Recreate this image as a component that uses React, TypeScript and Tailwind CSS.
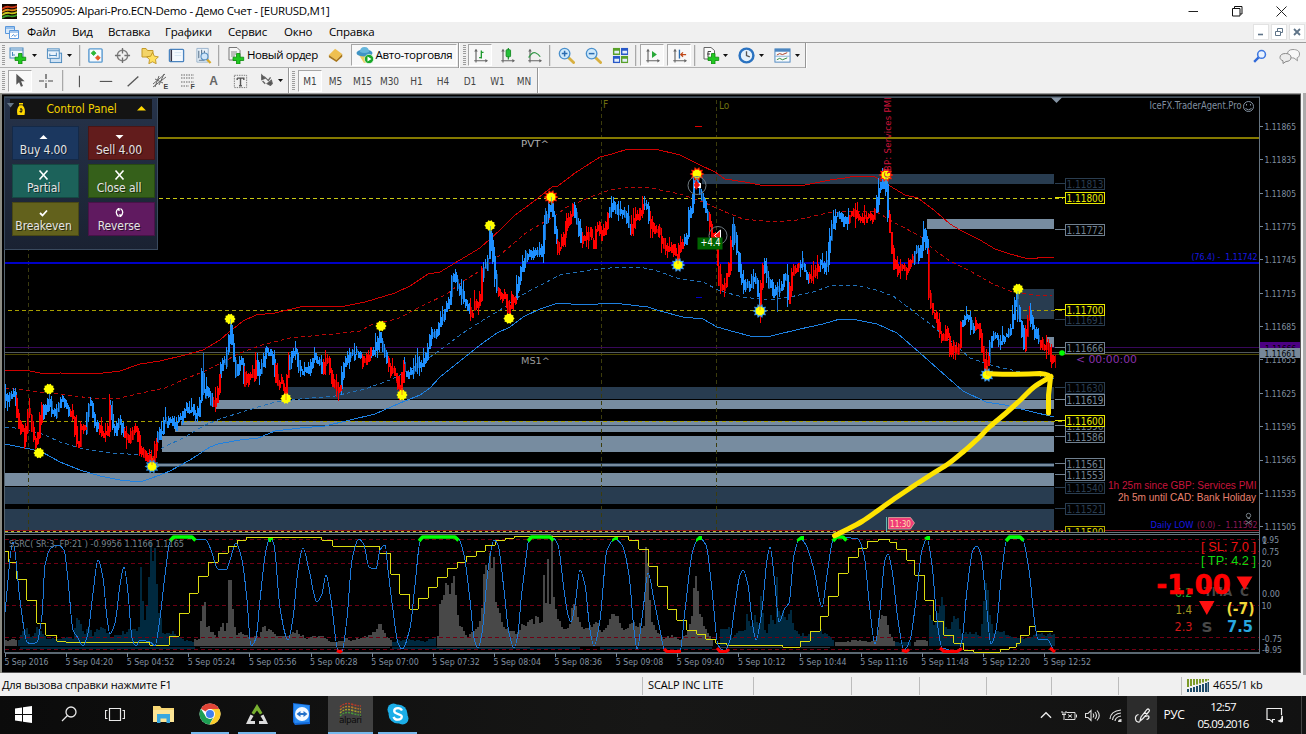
import React from "react";

const UI = "font-['Open_Sans','Noto_Sans',sans-serif]";
const TAHOMA = "'DejaVu Sans Condensed','DejaVu Sans',sans-serif";

type P = [number, number];
const pts = (a: number[]): string => {
  const out: string[] = [];
  for (let i = 0; i < a.length; i += 2) out.push(`${a[i]},${a[i + 1]}`);
  return out.join(" ");
};

/* ---------- market data ---------- */
const PRICE: [string, number[]][] = [
  ["b", [5, 400, 8, 396, 13, 392, 15, 395]],
  ["r", [16, 400, 18, 415, 21, 430, 24, 428, 26, 446, 29, 412, 31, 414, 34, 435, 38, 446, 40, 422]],
  ["b", [43, 404, 45, 415, 49, 400, 52, 410, 56, 412, 60, 405, 63, 399, 68, 408]],
  ["r", [70, 414, 74, 416, 77, 440, 79, 450, 81, 427, 84, 428]],
  ["b", [86, 430, 89, 405, 92, 404, 95, 420, 97, 428]],
  ["r", [99, 424, 104, 436, 106, 430, 108, 438]],
  ["b", [110, 408, 112, 418, 115, 432, 118, 424, 121, 422]],
  ["r", [124, 432, 130, 439, 134, 428, 138, 430, 141, 450, 145, 452, 149, 459, 152, 465, 155, 458]],
  ["b", [157, 442, 160, 430, 163, 430, 165, 418, 168, 425, 172, 421, 175, 426, 178, 420, 182, 420, 186, 408, 190, 410, 193, 408, 196, 416, 199, 410, 201, 398, 203, 370, 205, 398, 208, 388, 211, 394]],
  ["r", [213, 405, 216, 404, 218, 395]],
  ["b", [220, 376, 223, 362, 226, 360, 229, 340, 231, 325, 234, 350, 237, 372, 240, 362, 242, 358]],
  ["r", [244, 372, 246, 384, 249, 375, 252, 373, 255, 377]],
  ["b", [257, 362, 259, 373, 262, 365, 265, 355, 270, 351, 273, 357]],
  ["r", [275, 365, 278, 386, 281, 381, 285, 388, 287, 395]],
  ["b", [289, 365, 293, 351, 297, 352, 301, 370, 307, 370, 311, 368, 313, 355, 317, 360, 321, 360]],
  ["r", [323, 370, 326, 360, 329, 362, 332, 375, 338, 388]],
  ["b", [341, 385, 344, 365, 350, 354, 360, 353]],
  ["r", [362, 356, 365, 364, 368, 355]],
  ["b", [371, 351, 375, 351, 380, 332, 383, 345, 386, 353]],
  ["r", [388, 360, 392, 370, 396, 376, 400, 388, 402, 395]],
  ["b", [404, 366, 407, 375, 411, 369, 415, 371, 419, 362, 424, 364, 428, 354, 430, 338, 437, 334, 441, 320, 447, 306, 451, 300, 453, 280, 455, 275, 460, 290, 463, 295, 466, 305]],
  ["r", [470, 308, 473, 314, 477, 302, 481, 304]],
  ["b", [483, 272, 486, 265, 488, 268, 491, 230, 494, 255, 496, 273]],
  ["r", [498, 288, 502, 298, 505, 295, 507, 303, 510, 312, 513, 298]],
  ["b", [516, 298, 519, 281, 523, 266, 527, 257, 533, 252, 538, 253, 542, 256, 545, 222, 549, 212, 551, 201, 554, 214]],
  ["r", [557, 240, 560, 250, 564, 235, 568, 220, 571, 216]],
  ["b", [574, 207, 577, 220, 579, 226]],
  ["r", [582, 240, 588, 235, 592, 231, 595, 245, 598, 222, 603, 235, 606, 226]],
  ["b", [609, 212, 613, 202, 618, 211, 623, 209, 627, 214]],
  ["r", [631, 229, 635, 219, 641, 211]],
  ["b", [644, 205, 648, 206]],
  ["r", [650, 220, 655, 231, 660, 229, 665, 246, 670, 245, 674, 248, 678, 262, 680, 246]],
  ["b", [684, 241, 688, 235, 690, 212, 693, 205, 695, 180, 698, 178, 702, 193, 706, 205]],
  ["r", [709, 218, 713, 234, 717, 245, 719, 270, 722, 288, 726, 285, 730, 266]],
  ["b", [732, 238, 733, 225, 736, 240, 740, 270, 745, 284, 750, 288, 754, 276, 758, 288]],
  ["r", [760, 308, 762, 280]],
  ["b", [764, 264, 768, 279, 775, 292, 782, 289, 785, 276, 787, 277]],
  ["r", [789, 298, 793, 270, 797, 267]],
  ["b", [800, 262, 803, 263, 806, 274]],
  ["r", [809, 275, 814, 275, 817, 269]],
  ["b", [820, 266, 828, 264, 830, 246, 834, 222, 838, 216, 841, 216, 845, 222]],
  ["r", [849, 219, 852, 212, 858, 215, 865, 218, 873, 218]],
  ["b", [876, 210, 880, 186, 884, 177, 887, 180]],
  ["r", [889, 215, 892, 240, 894, 264, 898, 270, 904, 266, 908, 269, 912, 260]],
  ["b", [914, 257, 917, 245, 920, 257, 924, 236, 926, 226]],
  ["r", [928, 252, 930, 298, 933, 310, 937, 316, 941, 333, 945, 339, 948, 327, 951, 353, 955, 345, 960, 350]],
  ["b", [962, 322, 966, 318, 970, 318, 972, 325]],
  ["r", [975, 328, 979, 323, 982, 345, 985, 364, 987, 375]],
  ["b", [989, 360, 992, 336, 996, 338, 1002, 341, 1008, 335, 1013, 325, 1017, 292, 1020, 315, 1023, 329]],
  ["r", [1025, 348, 1028, 322]],
  ["b", [1030, 312, 1034, 328, 1037, 335]],
  ["r", [1040, 340, 1044, 347, 1048, 346, 1052, 357, 1055, 361]],
];

const RED_TOP = [5, 370, 30, 371, 45, 374, 60, 373, 95, 374, 120, 371, 140, 364, 160, 361, 185, 355, 203, 350, 220, 340, 228, 333, 243, 321, 256, 315, 275, 313, 300, 307, 317, 306, 345, 306, 365, 302, 395, 293, 410, 286, 428, 274, 440, 272, 455, 263, 480, 248, 500, 230, 515, 215, 533, 202, 552, 187, 558, 186, 575, 173, 600, 157, 612, 154, 628, 149, 655, 149, 680, 155, 700, 165, 715, 172, 725, 179, 745, 182, 760, 185, 805, 185, 830, 180, 845, 178, 855, 176, 875, 177, 890, 186, 905, 195, 918, 198, 935, 211, 950, 224, 960, 230, 980, 240, 995, 249, 1010, 254, 1025, 258, 1035, 259, 1040, 257, 1054, 257];
const RED_MID = [5, 388, 40, 392, 60, 394, 90, 398, 120, 398, 150, 391, 165, 388, 185, 379, 205, 371, 225, 361, 240, 353, 262, 345, 290, 338, 333, 334, 360, 331, 373, 324, 397, 319, 420, 307, 447, 294, 463, 281, 480, 271, 493, 261, 507, 249, 527, 232, 553, 217, 567, 207, 593, 196, 610, 190, 627, 187, 647, 187, 660, 190, 680, 194, 703, 202, 723, 211, 743, 219, 773, 222, 797, 220, 827, 213, 853, 211, 877, 212, 893, 222, 920, 236, 933, 249, 950, 261, 970, 271, 993, 284, 1010, 291, 1033, 295, 1052, 296];
const BLUE_MID = [5, 427, 25, 429, 45, 435, 60, 442, 80, 448, 110, 453, 145, 455, 160, 449, 185, 437, 205, 425, 220, 419, 245, 411, 275, 402, 300, 399, 335, 396, 365, 389, 390, 380, 410, 370, 430, 357, 440, 350, 463, 333, 480, 322, 500, 310, 520, 296, 535, 288, 560, 275, 590, 270, 620, 267, 640, 267, 657, 271, 680, 279, 703, 282, 720, 291, 743, 297, 767, 300, 790, 297, 813, 292, 830, 286, 853, 285, 873, 289, 893, 296, 913, 311, 930, 324, 953, 343, 970, 358, 994, 366, 1021, 372, 1054, 379];
const BLUE_LOW = [5, 444, 30, 449, 42, 452, 60, 462, 80, 470, 100, 476, 120, 480, 140, 482, 152, 478, 170, 471, 190, 460, 210, 447, 218, 444, 240, 440, 258, 438, 275, 431, 300, 428, 325, 426, 350, 420, 375, 414, 400, 403, 420, 395, 430, 388, 440, 377, 460, 361, 480, 345, 497, 333, 510, 327, 523, 317, 540, 309, 558, 303, 583, 305, 613, 303, 648, 307, 660, 311, 683, 317, 703, 319, 717, 327, 735, 332, 750, 336, 771, 336, 800, 329, 823, 324, 840, 319, 857, 320, 877, 324, 897, 333, 920, 353, 947, 377, 963, 391, 986, 402, 1005, 405, 1029, 411, 1054, 417];

const OSC = [5, 612, 13, 542, 20, 600, 27, 642, 31, 644, 37, 642, 42, 615, 45, 565, 51, 548, 58, 545, 64, 550, 68, 580, 73, 630, 78, 638, 83, 646, 88, 633, 93, 593, 98, 560, 103, 578, 107, 618, 110, 634, 115, 623, 120, 585, 124, 567, 128, 593, 132, 638, 136, 646, 140, 640, 150, 642, 155, 646, 160, 618, 165, 575, 170, 542, 178, 537, 195, 539, 206, 540, 211, 550, 218, 569, 226, 570, 230, 560, 236, 543, 242, 560, 247, 600, 251, 646, 256, 638, 260, 600, 266, 550, 270, 538, 274, 545, 280, 608, 288, 640, 293, 618, 298, 570, 303, 548, 309, 570, 317, 602, 322, 594, 326, 575, 331, 600, 338, 650, 342, 651, 347, 618, 352, 560, 359, 539, 364, 545, 369, 567, 376, 569, 380, 550, 385, 545, 388, 570, 393, 610, 398, 643, 402, 649, 410, 628, 415, 585, 420, 542, 426, 536, 458, 538, 464, 555, 470, 600, 474, 638, 478, 648, 482, 633, 488, 570, 494, 540, 498, 545, 504, 590, 509, 633, 514, 648, 518, 634, 521, 600, 524, 575, 529, 540, 535, 537, 553, 538, 558, 545, 564, 590, 568, 615, 571, 622, 575, 605, 580, 570, 585, 585, 590, 630, 594, 646, 600, 620, 607, 550, 615, 539, 622, 545, 629, 575, 634, 630, 637, 649, 643, 610, 648, 573, 654, 600, 660, 630, 665, 651, 680, 651, 685, 610, 693, 550, 699, 538, 706, 545, 712, 590, 718, 645, 725, 651, 730, 640, 735, 605, 740, 575, 743, 570, 748, 585, 752, 620, 756, 640, 762, 610, 767, 560, 770, 547, 775, 585, 779, 622, 785, 608, 789, 603, 794, 555, 800, 538, 806, 545, 814, 570, 822, 607, 827, 575, 833, 540, 838, 537, 858, 539, 864, 555, 870, 610, 875, 644, 880, 610, 885, 560, 888, 554, 892, 570, 898, 620, 904, 650, 910, 640, 916, 600, 922, 550, 927, 539, 932, 565, 937, 620, 942, 648, 958, 651, 962, 640, 967, 590, 973, 550, 977, 546, 981, 555, 986, 600, 991, 644, 996, 630, 1002, 570, 1007, 539, 1022, 538, 1029, 570, 1035, 625, 1038, 639, 1047, 639, 1054, 651];

/* stepped line: start x, level */
const STEPS = [5, 551, 9, 562, 17, 579, 27, 600, 37, 623, 46, 635, 57, 641, 66, 642, 150, 645, 170, 636, 180, 613, 190, 593, 199, 576, 209, 562, 219, 553, 229, 546, 238, 540, 247, 537, 322, 540, 333, 546, 380, 553, 391, 574, 400, 594, 410, 609, 419, 598, 429, 587, 438, 577, 448, 568, 458, 562, 467, 556, 477, 551, 486, 545, 496, 540, 506, 538, 515, 536, 629, 540, 639, 549, 649, 566, 658, 586, 668, 609, 677, 620, 687, 630, 697, 634, 706, 639, 716, 643, 727, 645, 783, 647, 801, 641, 811, 631, 821, 616, 829, 596, 839, 573, 849, 557, 859, 548, 868, 541, 879, 539, 890, 542, 897, 549, 907, 560, 915, 575, 925, 600, 934, 621, 944, 635, 954, 643, 964, 650, 974, 652, 1001, 649, 1010, 647, 1017, 643, 1021, 635, 1030, 626, 1036, 631, 1053, 631];

const HIST: [string, number[]][] = [
  ["g", [5, 6, 16, 6]],
  ["b", [18, 6, 25, 20, 30, 8, 37, 18, 45, 8, 55, 7, 66, 9, 72, 8, 74, 20, 77, 36, 79, 22, 84, 14, 88, 20, 92, 10, 101, 22, 105, 15, 110, 10, 120, 12, 125, 15, 137, 17, 139, 18, 140, 80, 142, 42, 144, 30, 147, 40, 149, 94, 154, 97, 156, 55, 158, 35, 162, 15, 166, 12, 172, 14, 178, 8, 185, 6, 192, 4]],
  ["g", [194, 6, 199, 8, 201, 40, 204, 40, 206, 20, 210, 15, 216, 8, 222, 24, 225, 10, 228, 60, 230, 60, 232, 35, 235, 12, 240, 13, 250, 8, 258, 10, 262, 18, 270, 16, 276, 10, 285, 10, 297, 14, 305, 7, 312, 10, 322, 9, 330, 4, 342, 5, 345, 9, 350, 5, 360, 8, 370, 10, 378, 20, 381, 20, 386, 10, 390, 6]],
  ["b", [392, 4, 400, 6, 410, 6, 425, 5, 434, 8]],
  ["g", [437, 10, 439, 40, 442, 42, 445, 55, 450, 60, 454, 68, 456, 35, 460, 18, 466, 10, 474, 14, 478, 20, 481, 35, 482, 70, 486, 78, 490, 85, 494, 86, 495, 45, 500, 25, 505, 18, 510, 15, 515, 12, 520, 20, 526, 22, 532, 25, 537, 28, 541, 25, 543, 82, 545, 40, 547, 90, 549, 45, 551, 98, 553, 48, 556, 30, 560, 20, 568, 18, 574, 50, 576, 30, 580, 20, 590, 18, 596, 22, 602, 12, 608, 25, 612, 30, 618, 30, 622, 18, 628, 20, 636, 22, 643, 20, 644, 95, 646, 95, 648, 60, 650, 30, 655, 15, 662, 8, 672, 10, 680, 6, 686, 12, 691, 30, 693, 60, 696, 68, 698, 40, 700, 30, 705, 15, 712, 6]],
  ["b", [720, 16, 727, 20, 732, 8, 738, 14, 744, 15, 746, 32, 750, 20, 755, 30, 758, 20, 759, 75, 761, 35, 765, 12, 770, 28, 775, 25, 776, 75, 778, 35, 783, 35, 785, 25, 787, 35, 790, 40, 793, 15, 800, 12, 806, 10, 812, 16, 820, 15, 828, 10, 833, 5]],
  ["g", [835, 4, 845, 4, 855, 6, 870, 4, 876, 8, 879, 30, 886, 32, 888, 15, 893, 5]],
  ["b", [895, 4, 910, 4]],
  ["g", [914, 5, 926, 6]],
  ["b", [929, 28, 933, 20, 937, 30, 940, 44, 943, 40, 945, 20, 948, 15, 953, 28, 957, 30, 960, 12, 965, 14, 980, 12, 984, 50, 986, 78, 989, 30, 993, 15, 1000, 16, 1005, 12, 1012, 8, 1020, 8, 1030, 9, 1035, 12, 1045, 12, 1054, 12]],
];

const rnd = (n: number) => {
  const v = Math.sin(n * 12.9898) * 43758.5453;
  return v - Math.floor(v);
};
const lerp = (a: number[], x: number) => {
  for (let i = 0; i < a.length - 2; i += 2)
    if (x <= a[i + 2]) return a[i + 1] + ((a[i + 3] - a[i + 1]) * (x - a[i])) / (a[i + 2] - a[i] || 1);
  return a[a.length - 1];
};

const candlePaths = () => {
  const d: Record<string, string> = { b: "", r: "", bd: "", rd: "" };
  PRICE.forEach(([c, own], n) => {
    const next = PRICE[n + 1];
    const a = next ? [...own, next[1][0], next[1][1]] : own;
    const end = a[a.length - 2];
    for (let x = a[0]; x < end - 0.5; x += 1.9) {
      const y1 = lerp(a, x);
      const y2 = lerp(a, Math.min(end, x + 1.9));
      const swing = (rnd(x + 2) - 0.5) * 5;
      const lo = Math.min(y1, y2) + swing - rnd(x) * 3.5;
      const hi = Math.max(y1, y2) + swing + rnd(x + 7) * 3.5;
      const xi = Math.round(x);
      const k = rnd(x + 3) > 0.74 ? c + "d" : c;
      d[k] += `M${xi} ${lo.toFixed(1)}h2V${(hi + 1.5).toFixed(1)}h-2z`;
      const w = rnd(x + 11) > 0.6 ? 11 : 4;
      d[c] += `M${xi} ${(lo - rnd(x + 5) * w).toFixed(1)}h1V${(hi + rnd(x + 9) * w).toFixed(1)}h-1z`;
    }
  });
  return d;
};
const histPaths = () => {
  const d: Record<string, string> = { b: "", g: "" };
  HIST.forEach(([c, a]) => {
    const end = a[a.length - 2];
    for (let x = a[0]; x <= end; x += 2) {
      const h = lerp(a, x) * (0.86 + rnd(x) * 0.28);
      d[c] += `M${Math.round(x)} 646V${Math.round(646 - h)}h2V646z`;
    }
  });
  return d;
};
const CANDLES = candlePaths();
const BARS = histPaths();
const stepPath = () => {
  let s = `M${STEPS[0]} ${STEPS[1]}`;
  for (let i = 2; i < STEPS.length; i += 2) s += `H${STEPS[i] - 1}L${STEPS[i]} ${STEPS[i + 1]}`;
  return s;
};
/* monotone cubic: passes through every point and is flat at the extremes */
const curve = (a: number[]) => {
  const n = a.length / 2;
  const X = (i: number) => a[2 * i];
  const Y = (i: number) => a[2 * i + 1];
  const slope = (i: number) => (Y(i + 1) - Y(i)) / (X(i + 1) - X(i));
  const m = (i: number) => {
    if (i === 0) return slope(0);
    if (i === n - 1) return slope(n - 2);
    const p = slope(i - 1);
    const q = slope(i);
    return p * q <= 0 ? 0 : (2 * p * q) / (p + q);
  };
  let s = `M${X(0)} ${Y(0)}`;
  for (let i = 0; i < n - 1; i++) {
    const h = (X(i + 1) - X(i)) / 3;
    s += `C${(X(i) + h).toFixed(1)} ${(Y(i) + m(i) * h).toFixed(1)} ${(X(i + 1) - h).toFixed(1)} ${(Y(i + 1) - m(i + 1) * h).toFixed(1)} ${X(i + 1)} ${Y(i + 1)}`;
  }
  return s;
};

const Txt = ({ x, y, w, s = 9, c = "#8090a0", b, f = TAHOMA, t }: { x: number; y: number; w?: number; s?: number; c?: string; b?: boolean; f?: string; t: string }) => (
  <text x={x} y={y} textLength={w} lengthAdjust="spacingAndGlyphs" fontSize={s} fill={c} fontWeight={b ? 700 : 400} fontFamily={f} xmlSpace="preserve">
    {t}
  </text>
);

const Sun = ({ x, y, ring }: { x: number; y: number; ring?: string }) => {
  const star = (r1: number, r2: number) => {
    let s = "";
    for (let i = 0; i < 20; i++) {
      const r = i % 2 ? r2 : r1;
      const t = (i * Math.PI) / 10;
      s += `${(x + r * Math.cos(t)).toFixed(1)},${(y + r * Math.sin(t)).toFixed(1)} `;
    }
    return s;
  };
  return (
    <g>
      {ring && <polygon points={star(7.4, 5)} fill={ring} />}
      <polygon points={star(ring ? 4.8 : 5.6, ring ? 4.1 : 4.4)} fill="#ffff00" />
    </g>
  );
};

const ZONES: [number, number, number, string][] = [
  [702, 174, 9.5, "d"], [927, 219, 10, "l"], [1018, 289, 30, "d"], [1047, 337, 10, "l"],
  [288, 387, 12, "d"], [215, 400, 9, "l"], [181, 421, 4, "l"], [175, 425.5, 6.5, "l"],
  [162, 436, 16, "l"], [157, 464, 2, "l"], [5, 473, 13, "l"], [5, 487, 16.5, "d"], [5, 509, 20.5, "d"],
];
const TAGS: [string, number, string][] = [
  ["1.11813", 184, "#2a3d50"], ["1.11772", 230, "#708090"], ["1.11691", 320, "#2a3d50"],
  ["1.11666", 348, "#708090"], ["1.11630", 388, "#2a3d50"], ["1.11619", 400, "#778899"], ["1.11596", 426, "#708090"],
  ["1.11586", 437, "#708090"], ["1.11553", 474.5, "#708090"], ["1.11561", 464, "#708090"], ["1.11540", 488, "#2a3d50"], ["1.11521", 509, "#2a3d50"],
  ["1.11800", 198, "#e8e800"], ["1.11700", 310, "#e8e800"], ["1.11600", 421, "#e8e800"],
];
const AXIS = ["1.11865", "1.11835", "1.11805", "1.11775", "1.11745", "1.11715", "1.11685", "1.11655", "1.11625", "1.11595", "1.11565", "1.11535", "1.11505"];
const TIMES = ["5 Sep 2016", "5 Sep 04:20", "5 Sep 04:52", "5 Sep 05:24", "5 Sep 05:56", "5 Sep 06:28", "5 Sep 07:00", "5 Sep 07:32", "5 Sep 08:04", "5 Sep 08:36", "5 Sep 09:08", "5 Sep 09:40", "5 Sep 10:12", "5 Sep 10:44", "5 Sep 11:16", "5 Sep 11:48", "5 Sep 12:20", "5 Sep 12:52"];
const SUNS: [number, number, string?][] = [
  [49, 389], [39, 453], [152, 466.5, "#2f8fe0"], [230, 319], [286, 398.5], [381, 326], [402, 395], [490, 225.5], [509, 318.5],
  [551, 197, "#ff2000"], [678, 265, "#3a9af0"], [697, 174, "#ff2000"], [760, 311, "#3a9af0"], [886, 175, "#ff2000"], [987, 375, "#3a9af0"], [1018, 289],
];
const LIM: P[] = [[170, 195], [419, 458], [528, 553], [833, 846], [1006, 1023]];

const Chart = () => (
  <svg className="block" width="1306" height="582" viewBox="0 93 1306 582">
    <rect x="0" y="93" width="1306" height="582" fill="#f0f0f0" />
    <rect x="0" y="93" width="1303" height="1" fill="#9a9a9a" />
    <rect x="1" y="94" width="1301" height="579" fill="#000" />
    <g shapeRendering="crispEdges">
      <rect x="0" y="93" width="2" height="580" fill="#8c8c84" />
      <rect x="2" y="94" width="1299" height="1" fill="#3c3c3c" />
      <rect x="1300" y="94" width="1" height="579" fill="#555" />
      <rect x="1301" y="93" width="2" height="582" fill="#f4f4f4" />
      <rect x="1303" y="93" width="3" height="582" fill="#ababab" />
      <rect x="2" y="672" width="1299" height="1" fill="#555" />
      <rect x="4" y="97" width="1256" height="1" fill="#4a5560" />
      <rect x="4" y="96" width="1256" height="1" fill="#2e3a44" />
      <rect x="4" y="97" width="1" height="556" fill="#56646f" />
      <rect x="1259" y="97" width="1" height="556" fill="#667480" />
      {ZONES.map(([x, y, h, c], i) => (
        <rect key={i} x={x} y={y} width={1054 - x} height={h} fill={c === "d" ? "#283c50" : "#778ca0"} />
      ))}
      <path d="M28.5 100V531" stroke="#3a3a10" strokeDasharray="4 3" />
      <path d="M716.5 100V531M601.5 100V531" stroke="#3c3c0c" strokeDasharray="4 3" />
      <path d="M157 463.5H1054M157 466.5H1054M5 487.5H1054M181 425.5H1054" stroke="#2a3d50" />
      <rect x="158" y="137" width="1101" height="2" fill="#857a00" />
      <path d="M5 198.5H1063" stroke="#c8c814" strokeDasharray="4 3" />
      <rect x="5" y="262" width="1254" height="2" fill="#0000c8" />
      <path d="M8 310.5H1063M8 421.5H1063" stroke="#a8a000" strokeWidth="1" strokeDasharray="4 3" />
      <path d="M5 347.5H1259" stroke="#38085a" />
      <rect x="5" y="352" width="1254" height="1" fill="#52585c" />
      <rect x="5" y="354" width="1254" height="1" fill="#4a4600" />
      <rect x="5" y="530" width="1254" height="1" fill="#8a1420" />
      <rect x="5" y="532" width="1254" height="1" fill="#69757e" />
      <path d="M5 531.5H1063" stroke="#c0b820" strokeDasharray="3 3" />
      <rect x="5" y="534" width="1254" height="1" fill="#69757e" />
      <rect x="5" y="652" width="1255" height="2" fill="#5b6872" />

      <polyline points={pts(RED_TOP)} fill="none" stroke="#d00000" />
      <polyline points={pts(RED_MID)} fill="none" stroke="#b80808" strokeDasharray="4 3" />
      <polyline points={pts(BLUE_MID)} fill="none" stroke="#2070b8" strokeDasharray="4 3" />
      <polyline points={pts(BLUE_LOW)} fill="none" stroke="#1e80e0" />
      <path d={CANDLES.bd} fill="#10508c" />
      <path d={CANDLES.rd} fill="#b00000" />
      <path d={CANDLES.b} fill="#1e90ff" />
      <path d={CANDLES.r} fill="#ff0000" />
      <path d="M203.5 353V395M733.5 217V250M777.5 290V312M112.5 401V420M49.5 392V405M545.5 208V240M1017.5 295V310" stroke="#1c70c8" />
      <path d="M1055.500 355V368" stroke="#c00000" />
      <path d="M695 126.500H702" stroke="#e00000" />
      <path d="M696 297.500H702" stroke="#0000c8" />
    </g>

    {SUNS.map(([x, y, r], i) => <Sun key={i} x={x} y={y} ring={r} />)}
    <path d="M152 456v9M286 392v8M402 388v7M678 258v6M760 303v7M987 366v9" stroke="#e87818" strokeWidth="1" opacity=".8" />
    <path d="M230.500 319v8M490.500 226v8M551.500 197v8M697 176v8M886 176v8M1018 291v8" stroke="#6aa890" strokeWidth="1" opacity=".8" />
    <circle cx="697" cy="185.500" r="9" fill="none" stroke="#6f7a80" />
    <circle cx="718" cy="235.500" r="9" fill="none" stroke="#6f7a80" />
    <path d="M694 183h7v5h-7z" fill="#fff" />
    <path d="M696 180l4 5-4 5-2-5z" fill="#e81010" />
    <path d="M720.500 230v11l-6-5.500z" fill="#ff1010" stroke="#fff" strokeWidth="1" />
    <rect x="697.500" y="237.500" width="25" height="12" fill="#006400" />
    <Txt x={700.500} y={246} w={20} s={10} c="#fff" t="+4.4" f="'DejaVu Sans'" />

    <Txt x={603} y={108} s={10} c="#70700f" t="F" />
    <Txt x={719} y={108.500} s={10} c="#70700f" t="Lo" />
    <Txt x={521} y={147} w={28} s={9.500} c="#b0b0b0" t="PVT^" f="'DejaVu Sans'" />
    <Txt x={521} y={364} w={29} s={9.500} c="#9a9a9a" t="MS1^" f="'DejaVu Sans'" />
    <clipPath id="top"><rect x="870" y="98" width="30" height="80" /></clipPath>
    <g clipPath="url(#top)">
      <text transform="translate(890.500 178) rotate(-90)" fontSize="9.500" fill="#d0143c" textLength="81" fontFamily={TAHOMA}>GBP: Services PMI</text>
    </g>
    <path d="M1051 97.500h11l-5.500 5.500z" fill="#8594a4" />
    <Txt x={1149.500} y={109} w={92} s={10.500} t="IceFX.TraderAgent.Pro" />
    <g fill="none" stroke="#8594a4" strokeWidth="1">
      <circle cx="1248.500" cy="106.500" r="5" />
      <path d="M1245.500 108.500q3 2.800 6 0" />
      <path d="M1246.500 104v1.500M1250.500 104v1.500" />
    </g>
    <Txt x={1191.500} y={260} w={66} s={9.500} c="#1818e0" t="(76.4) -  1.11742" />

    {TAGS.map(([t, y, c]) => (
      <g key={t}>
        <path d={`M1055 ${Math.round(y - 1) + 0.5}H1065`} stroke={c} />
        <rect x="1065.500" y={Math.round(y - 6) + 0.5} width="39" height="11" fill="#000" stroke={c} />
        <Txt x={1066.500} y={Math.round(y - 6) + 10} w={37} s={11} c={c} t={t} />
      </g>
    ))}
    <clipPath id="cut"><rect x="1050" y="520" width="60" height="12" /></clipPath>
    <g clipPath="url(#cut)">
      <rect x="1065.500" y="526.500" width="39" height="11" fill="#000" stroke="#b8b000" />
      <Txt x={1066.500} y={536} w={37} s={11} c="#d8d000" t="1.11500" />
    </g>
    <circle cx="1062" cy="353" r="2.800" fill="#00ff00" />
    <Txt x={1076} y={363} w={61} s={11} c="#8a32ac" t="< 00:00:00" f="'DejaVu Sans'" />

    {AXIS.map((t, i) => (
      <g key={t}>
        <path d={`M1260 ${Math.round(126 + i * 33.35) + 0.5}h3`} stroke="#778899" />
        <Txt x={1264.500} y={129.800 + i * 33.350} w={31.500} s={9} t={t} />
      </g>
    ))}
    <rect x="1260" y="342" width="40" height="6" fill="#4b0082" />
    <clipPath id="pt"><rect x="1260" y="342" width="40" height="6" /></clipPath>
    <g clipPath="url(#pt)"><Txt x={1265} y={351.500} w={31} s={9} c="#000" t="1.11666" /></g>
    <rect x="1260" y="348" width="40" height="10" fill="#778899" />
    <Txt x={1264.500} y={356.500} w={31.500} s={9} c="#000" t="1.11661" />

    <Txt x={1108} y={489} w={148.500} s={11} c="#c8143c" f="'Liberation Sans'" t="1h 25m since GBP: Services PMI" />
    <Txt x={1118} y={501} w={138} s={11} c="#e9806e" f="'Liberation Sans'" t="2h 5m until CAD: Bank Holiday" />
    <Txt x={1150.500} y={527.500} w={43} s={9.500} c="#1818e0" t="Daily LOW" />
    <Txt x={1197} y={527.500} w={60.500} s={9.500} c="#8c1858" t="(0.0) -  1.11502" />
    <g stroke="#778088" fill="none">
      <circle cx="1248.500" cy="515.500" r="2.200" />
      <path d="M1247.500 518.500h2.500M1245.500 520.500l6 4M1251.500 520.500l-6 4" />
    </g>
    <rect x="886" y="517" width="1" height="15" fill="#5fb8b0" />
    <path d="M888.500 517.500h22l4 5.500-4 6h-22z" fill="#f03c78" stroke="#d8b0a0" strokeWidth=".8" />
    <Txt x={890} y={526.500} w={21} s={9.500} c="#ffe0b0" t="11:30" />

    <g shapeRendering="crispEdges">
      <path d="M5 539.500H1259M5 551.500H1259M5 563.500H1259M5 605.500H1259M5 637.500H1259M5 649.500H1259" stroke="#700014" strokeDasharray="4 3" />
      <path d={BARS.g} fill="#484848" />
      <path d={BARS.b} fill="#00293f" />
      <path d="M20 647.500H195M600 647.500H712M392 647.500H580" stroke="#00293f" strokeWidth="2" />
      <path d="M200 647H390M437 647H530M720 647.500H830" stroke="#303c44" />
      <path d="M5 637.500H1055M5 649.500H1055" stroke="#700014" strokeDasharray="4 3" />
      <path d={stepPath()} fill="none" stroke="#dcdc10" />
      <path d={curve(OSC)} fill="none" stroke="#1c78d8" />
    </g>
    <g stroke="#00ff00" strokeWidth="3.500" fill="none" strokeLinejoin="round">
      {LIM.map(([a, b]) => <path key={a} d={`M${a} 541l3.500-4H${b - 3}l3.500 3.500`} />)}
    </g>
    <path d="M268 538h5v2h-2v2h-2v-2h-1zM612 539l3-2h3v3h-3l-3 2zM696 539l3-3h3v4h-3l-3 2zM797 539l4-3h3v4h-3l-4 2zM924 538l3-2h3v4h-4z" fill="#00ff00" />
    <g stroke="#ff0000" strokeWidth="3.200" fill="none">
      <path d="M337 650.500l3 1.500 2-1.500M664 649l3 2.500h14M717 648l3 3.500h6l3-2M902 650l4 1.500 3-2M940 648l4 3.500h13l5-3M1050 648l5 4" />
    </g>
    <Txt x={9} y={546.500} w={175} s={9.500} c="#77848d" t="SSRC( SR:3, FP:21 ) -0.9956 1.1166 1.1165" />

    <Txt x={1262} y={542.500} w={17} s={9} t="0.95" />
    <Txt x={1262} y={544} s={9} t="1" />
    <Txt x={1262} y={554.500} w={17} s={9} t="0.75" />
    <Txt x={1261.500} y={567} w={10} s={9} t="20" />
    <Txt x={1262} y={597} w={18} s={9} t="0.00" />
    <Txt x={1261.500} y={609} w={10} s={9} t="10" />
    <Txt x={1262} y={641.500} w={20} s={9} t="-0.75" />
    <Txt x={1262} y={653} w={20} s={9} t="-0.95" />
    <Txt x={1264} y={651} s={9} t="1" />

    <Txt x={1201} y={550.500} w={55} s={12.500} c="#f01010" f="'Liberation Sans'" t="[ SL: 7.0 ]" />
    <Txt x={1201} y={564.500} w={55} s={12.500} c="#10d810" f="'Liberation Sans'" t="[ TP: 4.2 ]" />
    <Txt x={1175} y={596.500} w={17} s={12} c="#18b030" f="'DejaVu Sans'" t="6.2" />
    <Txt x={1204} y={596} w={28} s={12} c="#484848" b t="TMA" />
    <Txt x={1240} y={596} w={9} s={12} c="#484848" b t="C" />
    <text x="1156.500" y="594" textLength="74" lengthAdjust="spacingAndGlyphs" fontSize="26" fontWeight="700" fontFamily="'DejaVu Sans'" fill="#ff0000" stroke="#ff0000" strokeWidth=".7">-1.00</text>
    <path d="M1236.500 576.500h16l-8 13.500zM1199 601h15.500l-7.700 14z" fill="#ff1010" />
    <Txt x={1175.500} y={613.500} w={16.500} s={12} c="#a89a20" f="'DejaVu Sans'" t="1.4" />
    <Txt x={1226.500} y={613.500} w={28} s={15} c="#f0d838" b f="'DejaVu Sans Condensed'" t="(-7)" />
    <Txt x={1174.500} y={631} w={18} s={12} c="#d01818" f="'DejaVu Sans'" t="2.3" />
    <Txt x={1201.500} y={632} w={11} s={14.500} c="#484848" b f="'DejaVu Sans'" t="S" />
    <Txt x={1227} y={631.500} w={26} s={15} c="#28a8e0" b f="'DejaVu Sans'" t="7.5" />

    {TIMES.map((t, i) => {
      const x = 5 + i * 61.12;
      return (
        <g key={t}>
          <path d={`M${Math.round(x) + 0.5} 653v4`} stroke="#778899" />
          <Txt x={x - 0.5} y={665} w={i ? 47.5 : 44} s={9.500} t={t} />
        </g>
      );
    })}

    <g fill="none" stroke="#ffe400" strokeWidth="5" strokeLinecap="round" strokeLinejoin="round">
      <path d={curve([834.5, 535.7, 848, 529, 862, 521.5, 880, 509, 897, 497, 932, 474, 948, 464, 963, 452, 977, 439.5, 990, 426.5, 1006, 413, 1021, 399.5, 1034, 387, 1051, 376.5])} />
      <path d="M989 373.800Q1020 375 1040 373.500Q1050 374 1050.500 378L1048.500 395V413" />
    </g>
  </svg>
);

/* ---------- toolbar pieces ---------- */
const Svg = ({ children, s = 18 }: { children: React.ReactNode; s?: number }) => (
  <svg width={s} height={s} viewBox="0 0 18 18" fill="none" className="shrink-0">{children}</svg>
);
const Box = ({ c, children }: { c: string; children?: React.ReactNode }) => (
  <div className={`flex h-[22px] shrink-0 items-center justify-center ${c}`}>{children}</div>
);
const Pressed = "border border-[#a6a6a6] border-r-white border-b-white bg-[#f8f8f8]";
const Sep = ({ c = "" }: { c?: string }) => <div className={`h-[21px] w-[2px] shrink-0 border-l border-[#a8a8a8] bg-[#dedede] ${c}`} />;
const End = ({ c = "" }: { c?: string }) => <div className={`h-[25px] w-[2px] shrink-0 border-l border-[#969696] bg-white ${c}`} />;
const Grip = ({ c = "" }: { c?: string }) => (
  <div className={`flex h-[20px] w-[6px] shrink-0 flex-col items-center justify-between ${c}`}>
    {Array.from({ length: 10 }, (_, i) => <div key={i} className="h-px w-[3px] bg-[#9c9c9c]" />)}
  </div>
);
const Down = ({ c }: { c: string }) => (
  <Box c={c}><svg width="5" height="3" viewBox="0 0 5 3" className="shrink-0"><path d="M0 0h5L2.500 3z" fill="#111" /></svg></Box>
);
const Plus = () => <path d="M9.500 7.500h3.500v3.700h3.700v3.300H13V18H9.500v-3.500H6v-3.300h3.500z" fill="#22c822" stroke="#0a8a0a" strokeWidth=".8" />;
const Axes = ({ children }: { children?: React.ReactNode }) => (
  <Svg s={16}><path d="M4.500 3v12.500H17M2.500 15.500h2M4.500 15v2.500" stroke="#666" strokeWidth="1.300" /><path d="M2.500 5L4.500 2l2 3zM15 13.500l3 2-3 2z" fill="#666" />{children}</Svg>
);
const Lens = ({ plus }: { plus?: boolean }) => (
  <Svg s={17}>
    <path d="M11 11l5.500 5.500" stroke="#d8b040" strokeWidth="3" strokeLinecap="round" />
    <circle cx="7" cy="7" r="5.600" fill="#cfe9fb" stroke="#4a90cc" strokeWidth="1.400" />
    <path d={plus ? "M4 7h6M7 4v6" : "M4 7h6"} stroke="#2a6cb0" strokeWidth="1.600" />
  </Svg>
);

const Toolbar1 = () => (
  <div className="flex h-[26px] items-center border-t border-[#9c9c9c] bg-[#f0f0f0]">
    <div className="flex h-[25px] items-center border-b border-[#b0b0b0]">
      <Grip />
      <Box c="w-[24px]"><Svg><rect x="1" y="2" width="13" height="10" fill="#eef6fd" stroke="#4a88bd" /><path d="M1 4h13M3.500 6v4M3 9h3" stroke="#4a88bd" /><Plus /></Svg></Box>
      <Down c="w-[8px]" />
      <Box c="ml-[5px] w-[23px]"><Svg s={17}><rect x="4.500" y="6.500" width="12" height="10" fill="#cfe2f4" stroke="#4a88bd" /><rect x="1.500" y="2" width="12.500" height="10" fill="#eaf3fc" stroke="#4a88bd" /><path d="M2 4h12M4 9h7M4 7v3M11 6v4" stroke="#4a88bd" /></Svg></Box>
      <Down c="w-[6px]" />
      <Sep c="ml-[7px]" />
      <Box c="ml-px w-[27px]"><Svg s={17}><rect x="2" y="2" width="14" height="14" rx="1" fill="#f6fbff" stroke="#5a9ad0" strokeWidth="1.500" /><path d="M7 4l2.500 2.500L7 9 4.500 6.500z" fill="#2eb83a" stroke="#2eb83a" /><path d="M11.500 9l2.500 2.500-2.500 2.500L9 11.500z" fill="#e85a28" stroke="#e85a28" /></Svg></Box>
      <Box c="w-[27px]"><Svg s={17}><circle cx="9" cy="9" r="5.500" stroke="#808080" strokeWidth="1.500" /><path d="M9 1v6M9 11v6M1 9h6M11 9h6" stroke="#707070" strokeWidth="1.400" /></Svg></Box>
      <Box c="w-[27px]"><Svg><path d="M1 2.500h4l1.500 2H12V11H1z" fill="#f3d468" stroke="#c49a28" /><path d="M11.500 6.500l1.900 3.700 4 .6-2.900 2.900.7 4-3.700-1.900-3.700 1.900.7-4L5.700 10.800l4-.6z" fill="#ffe060" stroke="#b88a18" strokeWidth=".8" /></Svg></Box>
      <Box c="w-[27px]"><Svg s={17}><rect x="1.500" y="2.500" width="15" height="13" rx="1" fill="#f4f9fe" stroke="#4a84c0" strokeWidth="1.400" /><path d="M3.500 3v12" stroke="#334" strokeWidth="1.600" /><path d="M7 6h7M7 9h7" stroke="#d5e4f2" /></Svg></Box>
      <Box c="w-[27px]"><Svg s={17}><path d="M2 1.500h12V16H2z" fill="#e8f1f9" stroke="#9ab4cc" /><path d="M4 4v8M7 3v5M10 4v4M4 14h6" stroke="#5f7890" strokeWidth="1.200" /><path d="M12 12.500l4.500 4.500" stroke="#d8a826" strokeWidth="2.400" /><circle cx="10" cy="10" r="3.700" fill="#cfe6fa" stroke="#5a90c0" strokeWidth="1.200" /></Svg></Box>
      <Sep c="ml-px" />
      <Box c="ml-[5px] w-[22px]"><Svg><path d="M2 1.500h8l3 3V14H2z" fill="#f6f6f6" stroke="#777" /><path d="M4 6h6M4 8h5M4 10h4" stroke="#888" /><Plus /></Svg></Box>
      <div className={`w-[72px] text-[11.500px] leading-[22px] tracking-[-0.4px] whitespace-nowrap text-black ${UI}`}>Новый ордер</div>
      <Box c="ml-[4px] w-[26px]"><Svg s={16}><path d="M1 9l7-7 8 6-6.500 6.500z" fill="#efc050" /><path d="M1 9l8.500 5.500L16 8v3l-6.500 6L1 11.500z" fill="#a8761a" /></Svg></Box>
      <Box c={`ml-[2px] w-[106px] ${Pressed}`}>
        <Svg><path d="M3 9l5 8 6-2 2-7z" fill="#eccf62" /><ellipse cx="8.500" cy="7" rx="8" ry="3.600" fill="#3f94c4" /><path d="M4 6q0-5 4.500-5T13 6q-4.500 2-9 0z" fill="#66b6dc" /><circle cx="13" cy="13" r="4.600" fill="#18a828" stroke="#fff" strokeWidth=".6" /><path d="M11.500 10.500l4 2.500-4 2.500z" fill="#fff" /></Svg>
        <span className={`ml-[2px] text-[11.500px] leading-[20px] tracking-[-0.3px] whitespace-nowrap text-black ${UI}`}>Авто-торговля</span>
      </Box>
      <End c="ml-[1px]" />
      <Grip c="ml-px" />
      <Box c={`ml-[1px] w-[24px] ${Pressed}`}><Axes><path d="M10.500 4v9M8 12h2.500M10.500 6H13" stroke="#1f9a2f" strokeWidth="1.500" /></Axes></Box>
      <Box c="ml-[2px] w-[26px]"><Axes><path d="M10.500 1v13" stroke="#118a20" strokeWidth="1.300" /><rect x="8" y="3" width="5" height="8" rx="1" fill="#24c038" stroke="#118a20" /></Axes></Box>
      <Box c="w-[28px]"><Axes><path d="M3 12q4-7 7.500-5.500T16 11" stroke="#36984a" strokeWidth="1.400" /></Axes></Box>
      <Sep c="ml-[1px]" />
      <Box c="ml-[2px] w-[27px]"><Lens plus /></Box>
      <Box c="w-[27px]"><Lens /></Box>
      <Box c="w-[26px]"><Svg s={17}><rect x="1" y="1" width="7.500" height="7.500" fill="#58a028" /><rect x="9.500" y="1" width="7.500" height="7.500" fill="#2858c8" /><rect x="1" y="9.500" width="7.500" height="7.500" fill="#2858c8" /><rect x="9.500" y="9.500" width="7.500" height="7.500" fill="#58a028" /><path d="M2.500 4h5v3h-5zM11 4h5v3h-5zM2.500 12.500h5v3h-5zM11 12.500h5v3h-5z" fill="#e4eefa" /></Svg></Box>
      <Sep c="ml-[2px]" />
      <Box c={`ml-[3px] w-[24px] ${Pressed}`}><Axes><path d="M9 4.500l5.500 4-5.500 4z" fill="#28a838" /></Axes></Box>
      <Box c={`ml-[3px] w-[24px] ${Pressed}`}><Axes><path d="M9.500 3v10" stroke="#2b6cb0" strokeWidth="1.500" /><path d="M11 8.500h6M13.500 6L11 8.500l2.500 2.500" stroke="#c04818" strokeWidth="1.400" /></Axes></Box>
      <Sep c="ml-[3px]" />
      <Box c="ml-[3px] w-[24px]"><Svg><path d="M2 1.500h7l3.500 3V13H2z" fill="#fbfbfb" stroke="#666" /><path d="M6 11V5.500h3M5 8h3" stroke="#444" /><Plus /></Svg></Box>
      <Down c="w-[5px]" />
      <Box c="ml-[6px] w-[24px]"><Svg s={17}><circle cx="9" cy="9" r="7.300" fill="#e4f1fc" stroke="#2a72c0" strokeWidth="2.600" /><path d="M9 4.500V9l3.500 1.500" stroke="#555" strokeWidth="1.400" /></Svg></Box>
      <Down c="w-[6px]" />
      <Box c="ml-[7px] w-[23px]"><Svg s={17}><rect x="1" y="2" width="16" height="14" fill="#f7fafd" stroke="#4c86c0" /><path d="M1 3.500h16" stroke="#4c86c0" strokeWidth="3" /><path d="M3 8.500l3-1.500 3 1 5-2" stroke="#a83a20" /><path d="M1 9.800h16" stroke="#8ab0d4" /><path d="M3 13.500l3-1.500 3 1.500 5-2" stroke="#2f8a38" /></Svg></Box>
      <Down c="w-[6px]" />
      <End c="ml-[5px]" />
    </div>
    <div className="ml-auto flex items-center gap-[12px] pr-[5px]">
      <Svg s={14}><path d="M1.500 16.500l6-6" stroke="#2f68d8" strokeWidth="3" /><circle cx="11" cy="7" r="5" fill="#eaf3ff" stroke="#3f78e0" strokeWidth="2" /></Svg>
      <svg width="22" height="16" viewBox="0 0 22 16" className="shrink-0"><path d="M14 1.500c4 0 6.500 1.500 6.500 4.500S19 9.500 18 9.800l.5 3L15 10c-4 0-6.500-1.500-6.500-4.200S10.500 1.500 14 1.500z" fill="#f8f8f8" stroke="#999" /><path d="M6.500 5.500c3.500 0 5.500 1.500 5.500 4s-2 4-5 4L4 15.500v-2.700C2 12 1 11 1 9.500c0-2.500 2-4 5.500-4z" fill="#ececec" stroke="#888" /></svg>
    </div>
  </div>
);

const Frame = ({ t, c }: { t: string; c: string }) => (
  <Box c={`pt-px font-['DejaVu_Sans_Condensed','DejaVu_Sans',sans-serif] text-[10px] tracking-[-0.1px] text-[#444] ${c}`}>{t}</Box>
);
const Toolbar2 = () => (
  <div className="flex h-[25px] items-center bg-[#f0f0f0]">
    <Grip />
    <Box c={`ml-[2px] w-[24px] ${Pressed}`}><Svg s={15}><path d="M4 1v13l3.300-3 2.200 5.500 2.500-1-2.300-5.500H14z" fill="#555" /></Svg></Box>
    <Box c="w-[27px]"><Svg><path d="M9 2v5M9 11v5M2 9h5M11 9h5" stroke="#444" strokeWidth="1.200" /><path d="M8.500 8.500h1v1h-1z" fill="#444" /></Svg></Box>
    <Sep c="ml-[3px]" />
    <Box c="w-[29px]"><Svg s={16}><path d="M9.500 3v13" stroke="#555" strokeWidth="1.300" /></Svg></Box>
    <Box c="w-[26px]"><Svg s={16}><path d="M2 9.500h14" stroke="#555" strokeWidth="1.300" /></Svg></Box>
    <Box c="w-[27px]"><Svg s={16}><path d="M3 15L15 4" stroke="#555" strokeWidth="1.500" /></Svg></Box>
    <Box c="w-[27px]"><Svg><path d="M2 12L14 2M2 15L15 5M4 15L8 4M8 13l5-11M4 7l8 4" stroke="#666" strokeWidth="1" /><text x="12.500" y="16.500" fontSize="7" fontFamily="Liberation Sans" fontWeight="700" fill="#444">E</text></Svg></Box>
    <Box c="w-[27px]"><Svg><path d="M3 3h13M3 6h13M3 10h13M3 14h8" stroke="#666" strokeDasharray="1.500 1" /><text x="12.500" y="16.500" fontSize="7" fontFamily="Liberation Sans" fontWeight="700" fill="#444">F</text></Svg></Box>
    <Box c="w-[27px] pt-px font-['Liberation_Sans',sans-serif] text-[12px] font-bold text-[#666]">A</Box>
    <Box c="w-[26px]"><Svg s={17}><rect x="2.500" y="3.500" width="13" height="13" stroke="#777" strokeDasharray="1.500 1" /><path d="M5.500 6.500h7v2M5.500 6.500v2M9 6.500v8M7.500 14.500h3" stroke="#555" strokeWidth="1.500" /></Svg></Box>
    <Box c="w-[24px] pl-[3px]"><Svg s={16}><path d="M3 2l4 4-4 1.500zM6 4l4 4M13 14l-4-2 5-4 1 4z" fill="#555" stroke="#666" strokeWidth="1.200" /><path d="M4 9l3 3M10 9l3-4" stroke="#666" strokeWidth="1.500" /></Svg></Box>
    <Down c="w-[6px]" />
    <End c="ml-[5px]" />
    <Grip />
    <Frame t="M1" c={`ml-[2px] w-[24px] ${Pressed}`} />
    <Frame t="M5" c="w-[27px]" />
    <Frame t="M15" c="w-[27px]" />
    <Frame t="M30" c="w-[27px]" />
    <Frame t="H1" c="w-[27px]" />
    <Frame t="H4" c="w-[26px]" />
    <Frame t="D1" c="w-[28px]" />
    <Frame t="W1" c="w-[27px]" />
    <Frame t="MN" c="w-[26px]" />
    <End />
  </div>
);

const PanelBtn = ({ c, t, icon }: { c: string; t: string; icon: React.ReactNode }) => (
  <div className={`flex h-[34px] flex-col items-center border border-black/25 pr-[4px] ${c}`}>
    <svg width="11" height="11" viewBox="0 0 11 11" className="mt-[4px] shrink-0" fill="none">{icon}</svg>
    <span className="mt-[1px] font-['DejaVu_Sans_Condensed','DejaVu_Sans',sans-serif] text-[12px] leading-[14px] tracking-[-0.1px] whitespace-nowrap text-[#e4e4e4] [text-shadow:1px_1px_0_#0008]">{t}</span>
  </div>
);
const ControlPanel = () => (
  <div className="absolute top-[4px] left-[4px] flex h-[153px] w-[154px] flex-col border border-[#3a4a5e] bg-gradient-to-b from-[#26334a] to-[#1a2232] px-[5px] pt-px">
    <div className="flex h-[20px] items-center justify-between bg-[#141414] px-[6px] pb-px">
      <svg width="10" height="12" viewBox="0 0 10 12"><path d="M3 0h4v1.500H3zM3.500 2.300h3C9 4.500 9.500 8 8.500 12h-7C.500 8 1 4.500 3.500 2.300z" fill="#ffd800" /><path d="M5 5v5M3.500 8.500h2.500V6H4" stroke="#141414" strokeWidth=".8" fill="none" /></svg>
      <span className="font-['DejaVu_Sans_Condensed','DejaVu_Sans',sans-serif] text-[12px] tracking-[-0.1px] text-[#f0d000]">Control Panel</span>
      <svg width="9" height="5" viewBox="0 0 9 5"><path d="M0 4.500h9L4.500 0z" fill="#ffd800" /></svg>
    </div>
    <svg width="7" height="5" viewBox="0 0 7 5" className="absolute top-[5px] left-[2px]"><path d="M0 0h7L3.500 4.500z" fill="#667788" /></svg>
    <div className="mt-[7px] grid grid-cols-[67px_67px] gap-x-[8.500px] gap-y-[4px] pl-[2px]">
      <PanelBtn c="bg-[#1b375f]" t="Buy 4.00" icon={<path d="M1.500 8h8L5.500 4z" fill="#fff" />} />
      <PanelBtn c="bg-[#621c1c]" t="Sell 4.00" icon={<path d="M1.500 4h8l-4 4z" fill="#fff" />} />
      <PanelBtn c="bg-[#1c625a]" t="Partial" icon={<path d="M1.500 1.500l8 9M9.500 1.500l-8 9" stroke="#fff" strokeWidth="1.600" />} />
      <PanelBtn c="bg-[#35601a]" t="Close all" icon={<path d="M1.500 1.500l8 9M9.500 1.500l-8 9" stroke="#fff" strokeWidth="1.600" />} />
      <PanelBtn c="bg-[#62611c]" t="Breakeven" icon={<path d="M2 6L4.500 8.500 9 3.500" stroke="#fff" strokeWidth="1.800" />} />
      <PanelBtn c="bg-[#601a60]" t="Reverse" icon={<path d="M4.500 1.500Q0 5 4.500 9.500M6.500 1.500Q11 5 6.500 9.500M5 1v3M6 10V7" stroke="#fff" strokeWidth="1.300" />} />
    </div>
  </div>
);

const Task = ({ c, on, children }: { c: string; on?: boolean; children: React.ReactNode }) => (
  <div className={`flex h-[38px] shrink-0 flex-col items-center ${c}`}>
    <div className="flex h-[36px] items-center justify-center">{children}</div>
    {on && <div className="h-[2px] w-full bg-[#76b9ed]" />}
  </div>
);

const Taskbar = () => (
  <div className="flex h-[38px] items-center bg-gradient-to-r from-[#0b0b0b] via-[#171716] to-[#121212]">
    <Task c="w-[46px]"><svg width="17" height="17" viewBox="0 0 17 17"><path d="M0 2.500L7 1.500V8H0zM8 1.300L17 0v8H8zM0 9h7v6.500l-7-1zM8 9h9v8l-9-1.300z" fill="#fff" /></svg></Task>
    <Task c="w-[46px]"><svg width="16" height="16" viewBox="0 0 16 16" fill="none" stroke="#e8e8e8" strokeWidth="1.300"><circle cx="10" cy="6" r="5" /><path d="M6.500 9.500L1 15" /></svg></Task>
    <Task c="w-[46px]"><svg width="20" height="15" viewBox="0 0 20 15" fill="none" stroke="#e8e8e8" strokeWidth="1.200"><path d="M4.500 1.500h11v12h-11zM2.500 3.500h-2v8h2M17.500 3.500h2v8h-2" /></svg></Task>
    <Task c="w-[50px]"><svg width="21" height="18" viewBox="0 0 21 18"><path d="M0 1h7l1.500 2H21v14H0z" fill="#f7d774" /><path d="M0 5h21v12H0z" fill="#fce596" /><path d="M4 9h13v9h-3.500v-4.500h-6V18H4z" fill="#38a8e0" /></svg></Task>
    <Task on c="ml-[3px] w-[38px]">
      <svg width="22" height="22" viewBox="0 0 22 22"><circle cx="11" cy="11" r="10.500" fill="#fff" /><path d="M11 11L1.900 5.800A10.500 10.500 0 0 1 20.100 5.800z" fill="#e04436" /><path d="M11 6h9.200A10.500 10.500 0 0 1 10.500 21.500l5-8z" fill="#fbcd2c" /><path d="M1.900 5.800A10.500 10.500 0 0 0 10.500 21.500l4-7.500-7 .5z" fill="#1d9f54" /><circle cx="11" cy="11" r="5" fill="#fff" /><circle cx="11" cy="11" r="4" fill="#4080f0" /></svg>
    </Task>
    <Task on c="ml-[9px] w-[38px]">
      <svg width="22" height="20" viewBox="0 0 22 20"><path d="M11 0l5.500 9-2.500 1.500-3-4-3 4L5.500 9z" fill="#78b030" /><path d="M4.500 10.500l3 1.500-3 5H9v3H0zM17.500 10.500l-3 1.500 3 5H13v3h9z" fill="#dcdcdc" /></svg>
    </Task>
    <Task c="ml-[6px] w-[40px]">
      <svg width="20" height="22" viewBox="0 0 20 22"><path d="M1 0l17 2v19L3 22 1 19z" fill="#1268d8" /><path d="M2 1l15 1.500V19L2.500 20z" fill="#2a8cf4" /><circle cx="10" cy="11" r="7" fill="#f2f8ff" /><path d="M4.500 11l4-3v2h3V8l4 3-4 3v-2h-3v2z" fill="#2470c8" /></svg>
    </Task>
    <Task on c="ml-[6px] w-[45px] bg-[#414141]">
      <svg width="24" height="24" viewBox="0 0 24 24" fill="none" strokeWidth="1.400" strokeDasharray="2 1">
        <path d="M1 5q5-5 11-3t10 2" stroke="#b83a28" /><path d="M1 8q5-5 11-3t10 2" stroke="#b87a28" /><path d="M1 11q5-5 11-3t10 2" stroke="#a8a028" /><path d="M1 14q5-5 11-3t10 2" stroke="#48983a" />
        <text x="0" y="21" fontSize="9" textLength="23" fontFamily="DejaVu Sans" fill="#0c0c0c" stroke="none">alpari</text>
      </svg>
    </Task>
    <Task on c="ml-[5px] w-[39px]">
      <svg width="22" height="22" viewBox="0 0 22 22"><circle cx="11" cy="11" r="9.500" fill="#1caee8" /><circle cx="6.500" cy="6.500" r="6" fill="#1caee8" /><circle cx="15.500" cy="15.500" r="6" fill="#1caee8" /><path d="M15 7.500c-.8-1.600-2.200-2.300-4-2.300-2.300 0-3.800 1.100-3.800 2.900 0 3.900 7.600 2 7.600 5.500 0 1.900-1.700 3-4 3-2.100 0-3.600-.8-4.200-2.800" fill="none" stroke="#fff" strokeWidth="2.300" /></svg>
    </Task>
    <div className="ml-auto flex h-[38px] items-center">
      <Box c="w-[23px] pl-[3px]"><svg width="12" height="8" viewBox="0 0 13 8" fill="none" stroke="#eee" strokeWidth="1.400"><path d="M1 7l5.500-5.500L12 7" /></svg></Box>
      <Box c="w-[23px] pl-[3px]"><svg width="16" height="11" viewBox="0 0 16 11" fill="none" stroke="#ddd"><path d="M5.500 2.500H14v7H4M15.500 4.500v3M1 1v2h4V1M1 4.500h4M3 5v5M7 4.500l4 3M11 4.500l-4 3" /></svg></Box>
      <Box c="w-[24px] pl-[2px]"><svg width="15" height="13" viewBox="0 0 15 13" fill="none" stroke="#ddd" strokeWidth="1.100"><path d="M.500 4.500h2.500l3-3v10l-3-3H.500zM8 4.500q1.500 2 0 4M10 3q3 3.500 0 7M12 1.500q4.500 5 0 10" /></svg></Box>
      <Box c="w-[24px]"><svg width="13" height="13" viewBox="0 0 13 13" fill="none" stroke="#ddd" strokeWidth="1.200"><path d="M1 10Q1.500 2 12 1M3.500 11Q4 5 12 4M6 12Q6.500 8 12 7" /><path d="M9 13q0-3 3.500-3V13z" fill="#ddd" stroke="none" /></svg></Box>
      <div className="flex h-[38px] w-[30px] items-center justify-center bg-[#2c2c2c]"><svg width="17" height="17" viewBox="0 0 17 17" fill="none" stroke="#eee" strokeWidth="1.200"><path d="M6 14l1-4L13 2.500q1-1 2 0t0 2L9 11.500zM10.500 5l2.500 2.500" /><path d="M4.500 7.500q-3.500 1-3 4.500t4 3M11 9.500q4-1.500 4 .5t-2.500 2.500" /></svg></div>
      <div className={`w-[34px] text-center text-[12px] tracking-[-0.4px] text-white ${UI}`}>РУС</div>
      <div className={`flex w-[65px] flex-col items-center pr-px text-[11.500px] leading-[17px] tracking-[-0.75px] text-white ${UI}`}>
        <span>12:57</span><span>05.09.2016</span>
      </div>
      <Box c="w-[37px]"><svg width="17" height="16" viewBox="0 0 17 16" fill="none" stroke="#eee" strokeWidth="1.200"><path d="M9 12.500H6.500v2.500l-3-2.500H1V1.500h14.500V8" /><path d="M15.500 8.500a3.500 3.500 0 1 1-4 5q4 0 4-5z" fill="#eee" stroke="none" /></svg></Box>
      <div className="ml-[8px] h-[38px] w-[5px] border-l border-[#444]" />
    </div>
  </div>
);

const Menu = ({ t, c }: { t: string; c: string }) => <div className={`shrink-0 whitespace-nowrap ${c}`}>{t}</div>;

export default function App() {
  return (
    <div className="flex h-[734px] w-[1306px] flex-col overflow-hidden bg-[#f0f0f0] text-black">
      <div className="flex h-[22px] items-center bg-white pl-[2px]">
        <svg width="15" height="15" viewBox="0 0 15 15"><rect width="15" height="15" fill="#160800" /><g fill="none" strokeWidth="1.800"><path d="M0 5q4-3 7.500-2T15 2" stroke="#d03818" /><path d="M0 8q4-3 7.500-2T15 5" stroke="#e08a18" /><path d="M0 11q4-3 7.500-2T15 8" stroke="#c8c820" /><path d="M0 14q4-3 7.500-2T15 11" stroke="#38a028" /></g></svg>
        <div className={`ml-[5px] text-[11.500px] tracking-[-0.3px] whitespace-nowrap ${UI}`}>29550905: Alpari-Pro.ECN-Demo - Демо Счет - [EURUSD,M1]</div>
        <div className="ml-auto flex items-center gap-[33px] pr-[19px]">
          <svg width="11" height="11" viewBox="0 0 11 11"><path d="M.500 5.500h9.500" stroke="#222" /></svg>
          <svg width="11" height="11" viewBox="0 0 11 11" fill="none" stroke="#111"><path d="M.500 2.500h7.500v7.500H.500zM2.500 2.500v-2h7.500v7.500H8" /></svg>
          <svg width="11" height="11" viewBox="0 0 11 11" stroke="#222"><path d="M.500.500l10 10M10.500.500l-10 10" /></svg>
        </div>
      </div>
      <div className={`flex h-[20px] items-center bg-[#f0f0f0] pb-px text-[11.500px] tracking-[-0.2px] ${UI}`}>
        <svg width="14" height="14" viewBox="0 0 14 14" fill="none" stroke="#5a98dc" className="ml-[5px]"><path d="M.500 1.500h9v7h-9z" fill="#d8eafb" /><path d="M4.500 5.500h9v8h-9z" fill="#fff" /><path d="M4.500 7h9M.500 3h9M6.500 11.500l2-2 1.500 2 2-2" /></svg>
        <Menu t="Файл" c="ml-[8px] w-[45px]" />
        <Menu t="Вид" c="w-[36px]" />
        <Menu t="Вставка" c="w-[57px]" />
        <Menu t="Графики" c="w-[63px]" />
        <Menu t="Сервис" c="w-[56px]" />
        <Menu t="Окно" c="w-[45px]" />
        <Menu t="Справка" c="w-[50px]" />
        <div className="ml-auto flex gap-[2px] pr-px">
          <div className="flex h-[16px] w-[16px] items-center justify-center border border-[#e2e2e2] bg-white"><svg width="8" height="8" viewBox="0 0 8 8"><path d="M1 6.500h5" stroke="#5f7488" strokeWidth="1.600" /></svg></div>
          <div className="flex h-[16px] w-[16px] items-center justify-center border border-[#e2e2e2] bg-white"><svg width="8" height="8" viewBox="0 0 8 8" fill="none" stroke="#5f7488"><path d="M.500 3.500h5v4h-5zM2.500 3v-2.500h5v4H6" /></svg></div>
          <div className="flex h-[16px] w-[16px] items-center justify-center border border-[#e2e2e2] bg-white"><svg width="8" height="8" viewBox="0 0 8 8" stroke="#5f7488" strokeWidth="1.800"><path d="M1 1l6 6M7 1L1 7" /></svg></div>
        </div>
      </div>
      <Toolbar1 />
      <Toolbar2 />
      <div className="relative h-[582px] shrink-0">
        <Chart />
        <ControlPanel />
      </div>
      <div className={`flex h-[21px] shrink-0 items-center bg-[#f0f0f0] text-[11px] tracking-[-0.15px] ${UI}`}>
        <div className="w-[642px] pl-[2px] whitespace-nowrap">Для вызова справки нажмите F1</div>
        <div className="flex h-[18px] w-[111px] items-center border-l border-[#bcbcbc] pl-[5px]">SCALP INC LITE</div>
        <div className="h-[18px] w-[98px] border-l border-[#bcbcbc]" />
        <div className="h-[18px] w-[68px] border-l border-[#bcbcbc]" />
        <div className="h-[18px] w-[67px] border-l border-[#bcbcbc]" />
        <div className="h-[18px] w-[65px] border-l border-[#bcbcbc]" />
        <div className="h-[18px] w-[67px] border-l border-[#bcbcbc]" />
        <div className="h-[18px] w-[63px] border-l border-[#bcbcbc]" />
        <div className="flex h-[18px] items-center border-l border-[#bcbcbc] pl-[5px]">
          <svg width="22" height="13" viewBox="0 0 22 13"><path d="M1 0v8M4 0v7M7 0v6M10 0v5.500M13 0v4.500M16 0v3.500M19 0v2.500M21.500 0v1.500" stroke="#7c9a28" strokeWidth="2" /><path d="M1 10v3M4 9v4M7 8v5M10 7v6M13 6v7M16 5v8M19 4v9M21.500 3v10" stroke="#1c4a68" strokeWidth="2" /></svg>
          <span className="ml-[4px] whitespace-nowrap">4655/1 kb</span>
        </div>
      </div>
      <Taskbar />
    </div>
  );
}
